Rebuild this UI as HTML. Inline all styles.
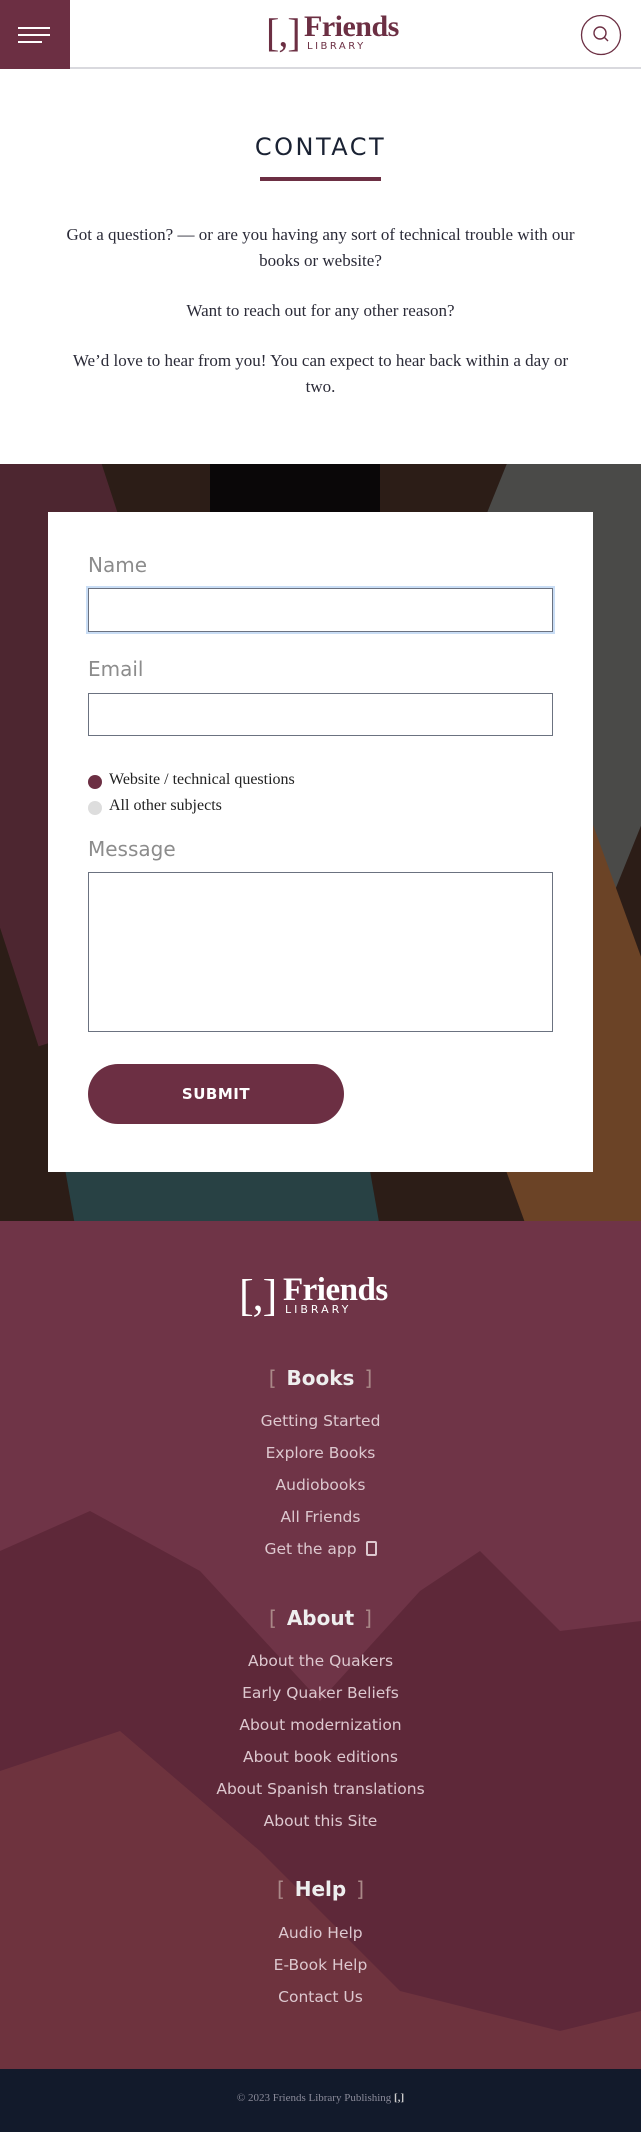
<!DOCTYPE html>
<html><head><meta charset="utf-8"><style>
*{margin:0;padding:0;box-sizing:border-box}
body{width:641px;height:2132px;background:#fff;font-family:"Liberation Sans",sans-serif;position:relative;overflow:hidden}
.abs{position:absolute}
.hdr{top:0;left:0;width:641px;height:69px;border-bottom:2px solid #d9d9de;background:#fff}
.burger{top:0;left:0;width:70px;height:69px;background:#6c2f43}
.burger i{position:absolute;left:18px;height:2px;background:#fff;display:block}
.logo{font-family:"Liberation Serif",serif;color:#6c2f43;white-space:nowrap}
.br{font-size:40px;line-height:40px;letter-spacing:-1px}
.fr{font-weight:bold;letter-spacing:-0.5px}
.lib{font-family:"DejaVu Sans",sans-serif;letter-spacing:2.5px}
.ser{font-family:"Liberation Serif",serif;color:#2b2b38;font-size:17px;text-align:center;width:641px;left:0}
.sec{top:464px;left:0;width:641px;height:757px;overflow:hidden;background:#2c1d17}
.card{top:512px;left:48px;width:545px;height:660px;background:#fff}
.lbl{left:88px;font-size:20px;color:#8c8c8c;font-family:"DejaVu Sans",sans-serif;font-weight:normal}
.inp{left:88px;width:465px;border:1.5px solid #6b7280;background:#fff}
.ft{top:1221px;left:0;width:641px;height:848px;overflow:hidden;background:#6f3447}
.fl{left:0;width:641px;text-align:center;color:#ddc8cf;font-family:"DejaVu Sans",sans-serif;font-size:15.5px}
.fh{left:0;width:641px;text-align:center;color:#eee;font-family:"DejaVu Sans",sans-serif;font-size:20px;font-weight:bold}
.fh span{color:#a88;font-weight:normal;margin:0 10px}
</style></head><body>
<div class="abs hdr"></div>
<div class="abs burger"><i style="top:27px;width:32px"></i><i style="top:34px;width:32px;left:18px"></i><i style="top:41px;width:24px"></i></div>
<div class="abs logo" style="left:266px;top:13px"><span class="br">[,]</span></div>
<div class="abs logo fr" style="left:304px;top:10px;font-size:30px;line-height:34px">Friends</div>
<div class="abs logo lib" style="left:307px;top:41px;font-size:10px;line-height:12px">LIBRARY</div>
<svg class="abs" style="left:580px;top:14px" width="42" height="42" viewBox="0 0 42 42"><circle cx="21" cy="21" r="19.5" fill="none" stroke="#6c2f43" stroke-width="1.3"/><circle cx="20" cy="19" r="6" fill="none" stroke="#6c2f43" stroke-width="1.4"/><line x1="24.5" y1="23.5" x2="28" y2="27" stroke="#6c2f43" stroke-width="1.4"/></svg>

<div class="abs" style="top:133px;left:0;width:641px;text-align:center;font-family:'DejaVu Sans',sans-serif;font-size:24px;letter-spacing:2.5px;color:#1a2233">CONTACT</div>
<div class="abs" style="top:177px;left:260px;width:121px;height:4px;background:#6c2f43"></div>
<div class="abs ser" style="top:222px;line-height:26px;padding:0 62px">Got a question? — or are you having any sort of technical trouble with our books or website?</div>
<div class="abs ser" style="top:298px;line-height:26px">Want to reach out for any other reason?</div>
<div class="abs ser" style="top:348px;line-height:26px;padding:0 72px">We’d love to hear from you! You can expect to hear back within a day or two.</div>

<div class="abs sec">
 <div class="abs" style="left:-60px;top:-40px;width:240px;height:600px;background:#4d2630;transform:rotate(-18deg)"></div>
 <div class="abs" style="left:210px;top:-30px;width:170px;height:140px;background:#0a0708;border-radius:20px"></div>
 <div class="abs" style="left:420px;top:-40px;width:260px;height:560px;background:#4a4a48;transform:rotate(22deg)"></div>
 <div class="abs" style="left:470px;top:380px;width:200px;height:420px;background:#6b4326;transform:rotate(-20deg)"></div>
 <div class="abs" style="left:70px;top:620px;width:300px;height:200px;background:#284144;transform:rotate(-10deg)"></div>
</div>
<div class="abs card"></div>
<div class="abs lbl" style="top:553px">Name</div>
<div class="abs inp" style="top:588px;height:44px;box-shadow:0 0 0 2px #c9ddf5"></div>
<div class="abs lbl" style="top:657px">Email</div>
<div class="abs inp" style="top:693px;height:43px"></div>
<div class="abs" style="left:88px;top:775px;width:14px;height:14px;border-radius:50%;background:#6c2f43"></div>
<div class="abs" style="left:109px;top:771px;font-family:'Liberation Serif',serif;font-size:16px;color:#222">Website / technical questions</div>
<div class="abs" style="left:88px;top:801px;width:14px;height:14px;border-radius:50%;background:#ddd"></div>
<div class="abs" style="left:109px;top:797px;font-family:'Liberation Serif',serif;font-size:16px;color:#222">All other subjects</div>
<div class="abs lbl" style="top:837px">Message</div>
<div class="abs inp" style="top:872px;height:160px"></div>
<div class="abs" style="left:88px;top:1064px;width:256px;height:60px;border-radius:30px;background:#6c2f43;color:#fff;font-family:'DejaVu Sans',sans-serif;font-weight:bold;font-size:15px;text-align:center;line-height:60px;letter-spacing:0.5px">SUBMIT</div>

<div class="abs ft">
 <svg class="abs" style="left:0;top:250px" width="641" height="600"><polygon points="0,80 90,40 200,100 320,230 420,120 480,80 560,160 641,150 641,600 0,600" fill="#5a2536" opacity="0.8"/><polygon points="0,300 120,260 260,380 400,520 560,560 641,540 641,600 0,600" fill="#7a3a42" opacity="0.6"/></svg>
</div>
<div class="abs logo" style="left:239px;top:1274px;color:#fff"><span class="br" style="font-size:44px;line-height:44px">[,]</span></div>
<div class="abs logo fr" style="left:283px;top:1271px;color:#fff;font-size:33px;line-height:38px">Friends</div>
<div class="abs logo lib" style="left:285px;top:1304px;color:#fff;font-size:11px;line-height:12px;letter-spacing:3px">LIBRARY</div>
<div class="abs fh" style="top:1366px"><span>[</span>Books<span>]</span></div>
<div class="abs fl" style="top:1412px">Getting Started</div>
<div class="abs fl" style="top:1444px">Explore Books</div>
<div class="abs fl" style="top:1476px">Audiobooks</div>
<div class="abs fl" style="top:1508px">All Friends</div>
<div class="abs fl" style="top:1540px">Get the app <span style="display:inline-block;width:11px;height:15px;border:2px solid #ddc8cf;border-radius:2px;vertical-align:-2px;margin-left:4px"></span></div>
<div class="abs fh" style="top:1606px"><span>[</span>About<span>]</span></div>
<div class="abs fl" style="top:1652px">About the Quakers</div>
<div class="abs fl" style="top:1684px">Early Quaker Beliefs</div>
<div class="abs fl" style="top:1716px">About modernization</div>
<div class="abs fl" style="top:1748px">About book editions</div>
<div class="abs fl" style="top:1780px">About Spanish translations</div>
<div class="abs fl" style="top:1812px">About this Site</div>
<div class="abs fh" style="top:1877px"><span>[</span>Help<span>]</span></div>
<div class="abs fl" style="top:1924px">Audio Help</div>
<div class="abs fl" style="top:1956px">E-Book Help</div>
<div class="abs fl" style="top:1988px">Contact Us</div>
<div class="abs" style="top:2069px;left:0;width:641px;height:63px;background:#121a2b"></div>
<div class="abs" style="top:2092px;left:0;width:641px;text-align:center;font-family:'Liberation Serif',serif;font-size:11px;color:#8a8a99">© 2023 Friends Library Publishing <b style="color:#ccc">[,]</b></div>
</body></html>
